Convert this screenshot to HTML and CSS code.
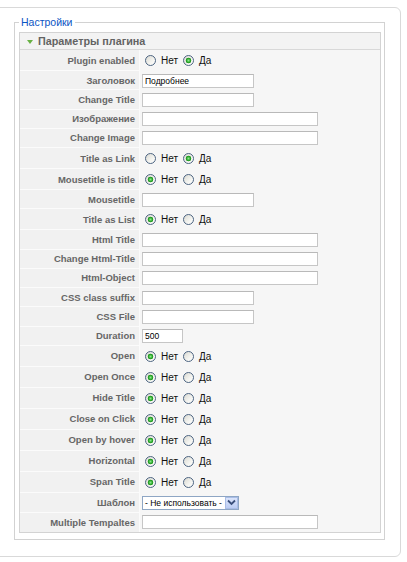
FILE: index.html
```html
<!DOCTYPE html>
<html lang="ru">
<head>
<meta charset="utf-8">
<title>Настройки</title>
<link rel="stylesheet" href="styles.css">
</head>
<body>
<div class="page">
  <fieldset class="settings">
    <legend class="settings-legend">Настройки</legend>
    <div class="panel">
      <h3 class="panel-title"><span class="tri"></span>Параметры плагина</h3>
      <div class="params">
        <div class="row r"><div class="key">Plugin enabled</div><div class="val"><label class="opt"><input type="radio" name="p1">Нет</label><label class="opt"><input type="radio" name="p1" checked>Да</label></div></div>
        <div class="row t"><div class="key">Заголовок</div><div class="val"><input class="txt w-short" type="text" value="Подробнее"></div></div>
        <div class="row t"><div class="key">Change Title</div><div class="val"><input class="txt w-short" type="text"></div></div>
        <div class="row t"><div class="key">Изображение</div><div class="val"><input class="txt w-long" type="text"></div></div>
        <div class="row t"><div class="key">Change Image</div><div class="val"><input class="txt w-long" type="text"></div></div>
        <div class="row r"><div class="key">Title as Link</div><div class="val"><label class="opt"><input type="radio" name="p2">Нет</label><label class="opt"><input type="radio" name="p2" checked>Да</label></div></div>
        <div class="row r"><div class="key">Mousetitle is title</div><div class="val"><label class="opt"><input type="radio" name="p3" checked>Нет</label><label class="opt"><input type="radio" name="p3">Да</label></div></div>
        <div class="row t"><div class="key">Mousetitle</div><div class="val"><input class="txt w-short" type="text"></div></div>
        <div class="row r"><div class="key">Title as List</div><div class="val"><label class="opt"><input type="radio" name="p4" checked>Нет</label><label class="opt"><input type="radio" name="p4">Да</label></div></div>
        <div class="row t"><div class="key">Html Title</div><div class="val"><input class="txt w-long" type="text"></div></div>
        <div class="row t"><div class="key">Change Html-Title</div><div class="val"><input class="txt w-long" type="text"></div></div>
        <div class="row t"><div class="key">Html-Object</div><div class="val"><input class="txt w-long" type="text"></div></div>
        <div class="row t"><div class="key">CSS class suffix</div><div class="val"><input class="txt w-short" type="text"></div></div>
        <div class="row t"><div class="key">CSS File</div><div class="val"><input class="txt w-short" type="text"></div></div>
        <div class="row t"><div class="key">Duration</div><div class="val"><input class="txt w-dur" type="text" value="500"></div></div>
        <div class="row r"><div class="key">Open</div><div class="val"><label class="opt"><input type="radio" name="p5" checked>Нет</label><label class="opt"><input type="radio" name="p5">Да</label></div></div>
        <div class="row r"><div class="key">Open Once</div><div class="val"><label class="opt"><input type="radio" name="p6" checked>Нет</label><label class="opt"><input type="radio" name="p6">Да</label></div></div>
        <div class="row r"><div class="key">Hide Title</div><div class="val"><label class="opt"><input type="radio" name="p7" checked>Нет</label><label class="opt"><input type="radio" name="p7">Да</label></div></div>
        <div class="row r"><div class="key">Close on Click</div><div class="val"><label class="opt"><input type="radio" name="p8" checked>Нет</label><label class="opt"><input type="radio" name="p8">Да</label></div></div>
        <div class="row r"><div class="key">Open by hover</div><div class="val"><label class="opt"><input type="radio" name="p9" checked>Нет</label><label class="opt"><input type="radio" name="p9">Да</label></div></div>
        <div class="row r"><div class="key">Horizontal</div><div class="val"><label class="opt"><input type="radio" name="p10" checked>Нет</label><label class="opt"><input type="radio" name="p10">Да</label></div></div>
        <div class="row r"><div class="key">Span Title</div><div class="val"><label class="opt"><input type="radio" name="p11" checked>Нет</label><label class="opt"><input type="radio" name="p11">Да</label></div></div>
        <div class="row s"><div class="key">Шаблон</div><div class="val"><span class="select"><span class="select-text">- Не использовать -</span><span class="select-btn"><svg width="9" height="7" viewBox="0 0 9 7"><path d="M1 1.5 L4.5 5 L8 1.5" fill="none" stroke="#3a4f7a" stroke-width="1.8"/></svg></span></span></div></div>
        <div class="row t last"><div class="key">Multiple Tempaltes</div><div class="val"><input class="txt w-long" type="text"></div></div>
      </div>
    </div>
  </fieldset>
</div>
</body>
</html>
```

FILE: styles.css
```css
html, body {
  margin: 0;
  padding: 0;
  background: #ffffff;
}

body {
  font-family: "Liberation Sans", Arial, sans-serif;
  color: #333;
}

.page {
  margin: 7px 6px 0 -10px;
  border: 1px solid #d9d9d9;
  border-radius: 6px;
  padding: 8px 15px 16px 23px;
  background: #fff;
}

.settings {
  margin: 0;
  border: 1px solid #d2d2d2;
  padding: 3px 3px 6px 4px;
  min-inline-size: 0;
}

.settings-legend {
  padding: 0 2px;
  font-size: 10.5px;
  line-height: 13px;
  color: #0b55c4;
}

.panel {
  border: 1px solid #d3d3d3;
  background: #f6f6f6;
}

.panel-title {
  margin: 0;
  height: 16px;
  display: flex;
  align-items: center;
  background: #f3f3f3;
  border-bottom: 1px solid #d8d8d8;
  font-size: 10.8px;
  font-weight: bold;
  color: #636363;
}

.tri {
  width: 0;
  height: 0;
  margin: 1px 5px 0 7px;
  border-left: 3px solid transparent;
  border-right: 3px solid transparent;
  border-top: 4px solid #68b144;
}

.params {
  display: flex;
  flex-direction: column;
}

.row {
  display: grid;
  grid-template-columns: 120px 1fr;
  height: 21px;
}

.row.t {
  height: 19.25px;
}

.row.s {
  height: 20px;
}

.key {
  box-sizing: border-box;
  display: flex;
  align-items: center;
  justify-content: flex-end;
  padding-right: 4px;
  background: #f1f1f1;
  border-right: 1px solid #fbfbfb;
  border-bottom: 1px solid #fbfbfb;
  font-size: 9.5px;
  font-weight: bold;
  color: #666;
  white-space: nowrap;
}

.row.last .key {
  border-bottom: none;
}

.val {
  display: flex;
  align-items: center;
  padding-left: 2px;
}

.opt {
  display: inline-flex;
  align-items: center;
  font-size: 10px;
  color: #111;
  margin-right: 5px;
}

.opt input {
  appearance: none;
  -webkit-appearance: none;
  box-sizing: border-box;
  width: 11px;
  height: 11px;
  margin: 0 5px 0 3px;
  border: 1px solid #4c6481;
  border-radius: 50%;
  background: linear-gradient(135deg, #d9d9d2 0%, #f4f4f0 60%, #ffffff 100%);
}

.opt + .opt input {
  margin-left: 0;
}

.opt input:checked {
  background:
    radial-gradient(circle at 50% 50%, #8ee88e 0, #27a527 2px, #1f8f1f 2.6px, transparent 3.1px),
    linear-gradient(135deg, #d9d9d2 0%, #f4f4f0 60%, #ffffff 100%);
}

.txt {
  box-sizing: border-box;
  height: 14px;
  margin: 0;
  padding: 0 2px;
  border: 1px solid #c6c6c6;
  border-top-color: #b9b9b9;
  background: #fff;
  font-family: "Liberation Sans", Arial, sans-serif;
  font-size: 8.5px;
  color: #000;
}

.w-short { width: 112px; }
.w-long { width: 176px; }
.w-dur { width: 41px; }

.select {
  box-sizing: border-box;
  display: inline-flex;
  align-items: center;
  width: 97px;
  height: 14px;
  border: 1px solid #8ea6c4;
  background: #fff;
}

.select-text {
  flex: 1;
  padding-left: 2px;
  font-size: 8.5px;
  color: #000;
  white-space: nowrap;
}

.select-btn {
  box-sizing: border-box;
  width: 13px;
  height: 12px;
  display: flex;
  align-items: center;
  justify-content: center;
  background: linear-gradient(180deg, #dbe5fb 0%, #bccdf3 100%);
  border: 1px solid #a9bde6;
}
```
